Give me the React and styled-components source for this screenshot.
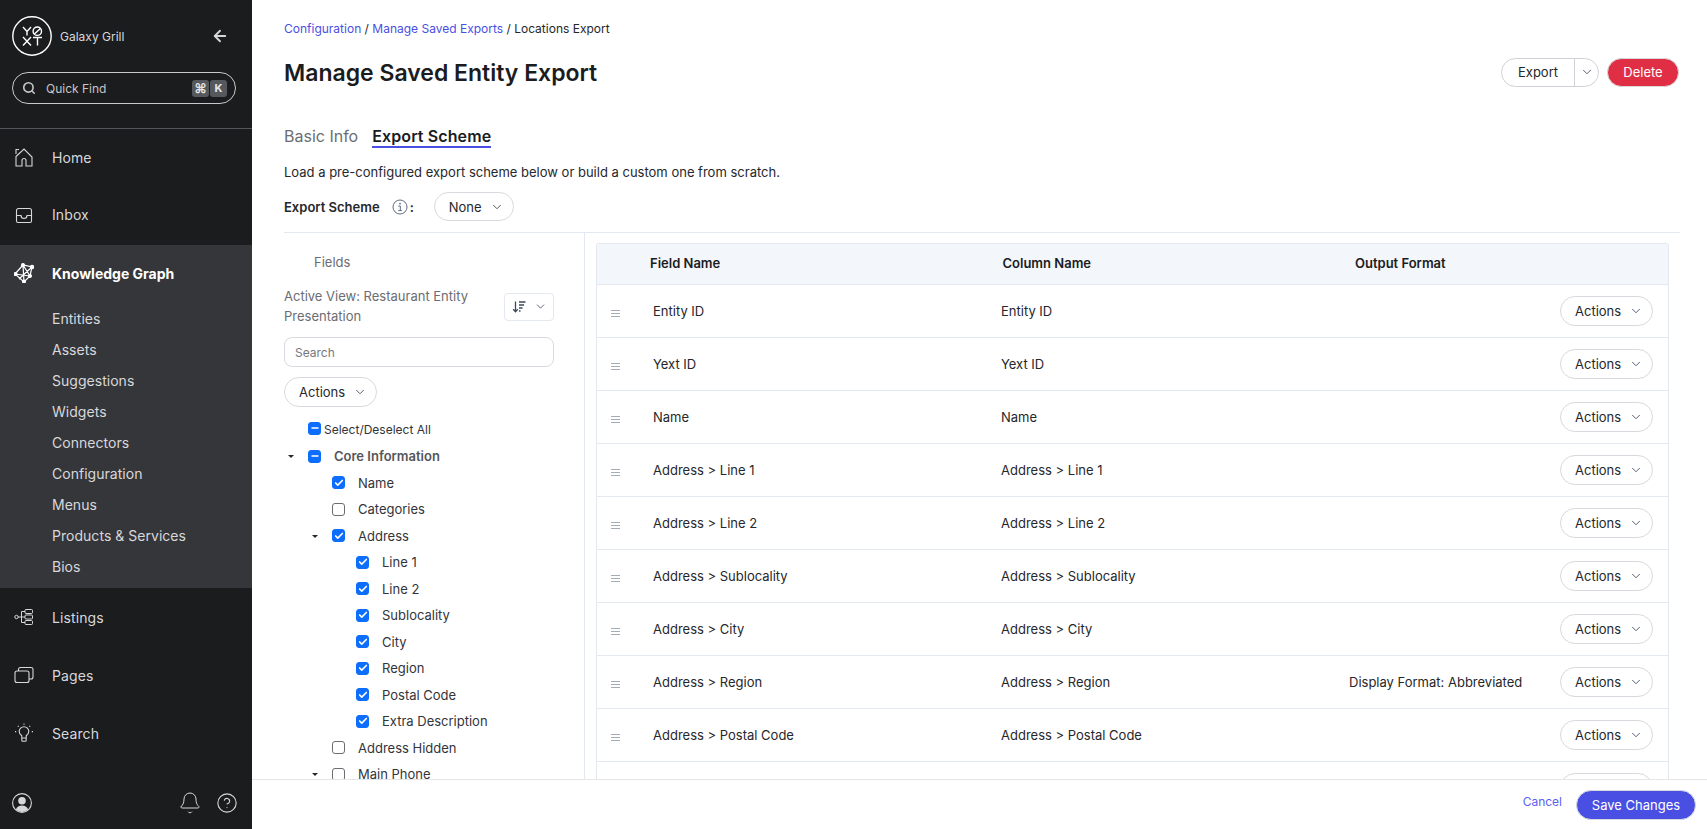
import React from "react";
import styled, { createGlobalStyle } from "styled-components";
import { ArrowLeft, Search, ChevronDown, Bell, CircleHelp, Check, Minus } from "lucide-react";

const GlobalStyle = createGlobalStyle`
  html, body {
    margin: 0;
    height: 100%;
    background: #fff;
  }
  body {
    font-family: Inter, "Liberation Sans", sans-serif;
    color: #26272b;
    overflow: hidden;
  }
  * {
    box-sizing: border-box;
  }
`;

const Page = styled.div`
  display: flex;
  height: 100vh;
`;

const Sidebar = styled.aside`
  width: 252px;
  flex: none;
  display: flex;
  flex-direction: column;
  background: #1b1c1e;
  color: #d8d8da;
`;

const SideTop = styled.div`
  padding: 16px 15px 24px 12px;
  border-bottom: 1px solid #56575a;
  height: 129px;
`;

const Brand = styled.div`
  display: flex;
  align-items: center;
  height: 40px;
  padding-right: 8px;
  font-size: 12px;
  color: #d8d8da;

  span {
    margin-left: 8px;
    flex: 1;
  }
`;

const QuickFind = styled.div`
  display: flex;
  align-items: center;
  height: 32px;
  width: 224px;
  margin-top: 16px;
  padding: 0 8px 0 9px;
  border: 1px solid #c9c9cb;
  border-radius: 16px;
  font-size: 12px;
  color: #c6c6c8;

  span {
    margin-left: 10px;
    flex: 1;
  }
`;

const Key = styled.kbd`
  display: flex;
  align-items: center;
  justify-content: center;
  width: 17px;
  height: 17px;
  margin-left: 1px;
  border-radius: 3px;
  background: #55585c;
  color: #e6e6e6;
  font-family: Inter, "DejaVu Sans", sans-serif;
  font-size: ${(p) => p.$size || 11}px;
  font-weight: 700;
`;

const NavItem = styled.div`
  display: flex;
  align-items: center;
  height: 58px;
  padding: 0 0 ${(p) => p.$lift || 0}px 14px;
  font-size: 14px;
  font-weight: ${(p) => (p.$active ? 700 : 400)};
  letter-spacing: ${(p) => (p.$active ? "0" : "0.1px")};
  color: ${(p) => (p.$active ? "#fff" : "#d8d8da")};

  svg {
    width: 20px;
    height: 20px;
    flex: none;
    margin-right: 18px;
  }
`;

const ActiveGroup = styled.div`
  background: #35363a;
  padding-bottom: 6px;
`;

const SubItem = styled.div`
  display: flex;
  align-items: center;
  height: 31px;
  padding-left: 52px;
  font-size: 14px;
  letter-spacing: 0.03px;
  color: #d8d8da;
`;

const SideFoot = styled.div`
  display: flex;
  align-items: center;
  margin-top: auto;
  height: 52px;
  padding: 0 14px 0 12px;
  color: #d8d8da;

  svg + svg {
    margin-left: 14px;
  }
`;

const Avatar = styled.svg`
  width: 20px;
  height: 20px;
  margin-right: auto;
`;

const Main = styled.main`
  flex: 1;
  min-width: 0;
  display: flex;
  flex-direction: column;
`;

const Content = styled.div`
  flex: 1;
  min-height: 0;
  display: flex;
  flex-direction: column;
  overflow: hidden;
  padding: 20px 27px 0 32px;
`;

const Breadcrumb = styled.div`
  height: 18px;
  font-size: 12px;
  line-height: 18px;
  color: #26272b;

  a {
    color: #4a4fe4;
    text-decoration: none;
  }
`;

const TitleRow = styled.div`
  display: flex;
  align-items: center;
  justify-content: space-between;
  height: 40px;
  margin-top: 15px;

  h1 {
    margin: 0;
    font-size: 23px;
    font-weight: 600;
    color: #1b1c1e;
  }
`;

const TitleActions = styled.div`
  display: flex;
  align-items: center;
  gap: 8px;
  margin: 0 1px 2px 0;
`;

const Split = styled.div`
  display: flex;
  align-items: center;
  height: 29px;
  border: 1px solid #cfd1d6;
  border-radius: 15px;
  font-size: 13px;
  background: #fff;

  span {
    padding: 0 16px;
    line-height: 27px;
    border-right: 1px solid #cfd1d6;
  }
  svg {
    margin: 0 4px 0 5px;
    color: #3b4a5f;
  }
`;

const DangerButton = styled.button`
  height: 29px;
  width: 72px;
  padding: 0;
  border: 1px solid #d8d9de;
  border-radius: 15px;
  background: #e02f44;
  color: #fff;
  font: inherit;
  font-size: 13px;
`;

const Tabs = styled.div`
  display: flex;
  gap: 14px;
  margin-top: 33px;
  height: 22px;
  font-size: 16px;
  line-height: 20px;
`;

const Tab = styled.div`
  color: ${(p) => (p.$active ? "#1b1c1e" : "#6c6d72")};
  font-weight: ${(p) => (p.$active ? 600 : 400)};
  letter-spacing: ${(p) => (p.$active ? "0.1px" : "0")};
  border-bottom: ${(p) => (p.$active ? "2px solid #4a4fe4" : "none")};
`;

const Description = styled.p`
  margin: 15px 0 0;
  font-size: 13px;
  line-height: 18px;
`;

const SchemeRow = styled.div`
  display: flex;
  align-items: center;
  margin-top: 11px;
  padding-bottom: 11px;
  border-bottom: 1px solid #e4e8f0;
  font-size: 13px;

  b {
    font-weight: 600;
  }
  > svg {
    margin: 0 2px 0 12px;
  }
  i {
    font-style: normal;
    font-weight: 600;
    margin-right: 20px;
  }
`;

const PillButton = styled.div`
  display: inline-flex;
  align-items: center;
  gap: 8px;
  width: ${(p) => p.$width || 93}px;
  height: ${(p) => p.$height || 30}px;
  flex: none;
  padding-left: 14px;
  border: 1px solid #d8d9de;
  border-radius: 15px;
  background: #fff;
  font-size: 13px;
  color: #26272b;

  svg {
    color: #3b4a5f;
  }
`;

const SplitPane = styled.div`
  flex: 1;
  min-height: 0;
  display: flex;
`;

const TreePanel = styled.section`
  width: 301px;
  flex: none;
  padding: 19px 30px 0 0;
  border-right: 1px solid #e4e8f0;
  overflow: hidden;
`;

const FieldsLabel = styled.div`
  padding-left: 30px;
  font-size: 13px;
  line-height: 20px;
  color: #6c6d72;
`;

const ViewRow = styled.div`
  display: flex;
  align-items: center;
  justify-content: space-between;
  margin-top: 15px;
  font-size: 13px;
  line-height: 19.5px;
  color: #6c6d72;

  span {
    width: 200px;
  }
`;

const SortButton = styled.div`
  display: flex;
  align-items: center;
  justify-content: center;
  gap: 8px;
  width: 50px;
  height: 28px;
  border: 1px solid #e4e8f0;
  border-radius: 4px;
  color: #3b4a5f;
`;

const SearchInput = styled.input`
  display: block;
  width: 270px;
  height: 30px;
  margin: 11px 0 10px;
  padding: 0 10px;
  border: 1px solid #d8d9de;
  border-radius: 8px;
  font: inherit;
  font-size: 12px;
  outline: none;

  &::placeholder {
    color: #77787d;
  }
`;

const Tree = styled.div`
  margin-top: 9.5px;
`;

const TreeRow = styled.div`
  position: relative;
  display: flex;
  align-items: center;
  height: 26.5px;
  padding-left: ${(p) => p.$level * 24}px;
  font-size: ${(p) => (p.$tight ? 12 : 13)}px;
  white-space: nowrap;
  font-weight: ${(p) => (p.$bold ? 600 : 400)};
  color: ${(p) => (p.$bold ? "#55565a" : "#33343a")};
`;

const Caret = styled.div`
  position: absolute;
  left: ${(p) => p.$level * 24 - 20}px;
  top: 12px;
  width: 0;
  height: 0;
  border-left: 3.5px solid transparent;
  border-right: 3.5px solid transparent;
  border-top: 3.5px solid #26272b;
`;

const Box = styled.div`
  display: flex;
  align-items: center;
  justify-content: center;
  width: 13px;
  height: 13px;
  flex: none;
  margin-right: ${(p) => (p.$tight ? 3 : 13)}px;
  margin-bottom: ${(p) => (p.$tight ? 3 : 0)}px;
  border-radius: 3px;
  border: 1px solid ${(p) => (p.$on ? "#0d6efd" : "#6c6d72")};
  background: ${(p) => (p.$on ? "#0d6efd" : "#fff")};
  color: #fff;
`;

const TablePanel = styled.section`
  flex: 1;
  min-width: 0;
  padding: 10px 11px 0 11px;
  overflow: hidden;
`;

const Table = styled.div`
  border: 1px solid #e4e8f0;
  border-bottom: none;
  border-radius: 3px 3px 0 0;
`;

const HeadRow = styled.div`
  display: flex;
  align-items: center;
  height: 41px;
  background: #f3f6fb;
  border-bottom: 1px solid #e4e8f0;
  font-size: 13px;
  font-weight: 600;
  color: #1b1c1e;
  padding-left: 53px;

  span {
    width: 352.5px;
    flex: none;
    padding-bottom: 2px;
  }
`;

const Row = styled.div`
  display: flex;
  align-items: center;
  height: 53px;
  padding: 0 15px 0 0;
  border-bottom: 1px solid #e4e8f0;
  font-size: 13px;
`;

const Handle = styled.div`
  width: 56px;
  flex: none;
  padding: 5px 0 0 14px;

  svg {
    display: block;
  }
`;

const Cell = styled.div`
  width: ${(p) => p.$width}px;
  flex: none;
  padding-bottom: 1px;
`;

const OutputCell = styled.div`
  flex: 1;
  min-width: 0;
  padding-bottom: 1px;
`;

const RowAction = styled.div`
  flex: none;
  margin-bottom: 1px;
`;

const Footer = styled.footer`
  display: flex;
  align-items: center;
  justify-content: flex-end;
  height: 50px;
  flex: none;
  padding: 0 11px 0 0;
  border-top: 1px solid #e6e6e8;
  background: #fff;
`;

const CancelLink = styled.a`
  margin: 0 14px 6px 0;
  font-size: 12px;
  color: #5a5ff0;
`;

const SaveButton = styled.button`
  width: 120px;
  height: 30px;
  margin-top: 1px;
  padding: 0;
  border: 1px solid #d8d9de;
  border-radius: 15px;
  background: #4a4fe4;
  color: #fff;
  font: inherit;
  font-size: 13px;
`;

const Logo = () => (
  <svg width="40" height="40" viewBox="0 0 40 40" fill="none" stroke="#fff" strokeWidth="1.4" style={{ flex: "none" }}>
    <circle cx="20" cy="20" r="19.2" />
    <path d="M11 11l4 4.5 4-4.5M15 15.5V19.5" />
    <circle cx="25.3" cy="15.2" r="4.2" />
    <path d="M22.4 18l6-5.6" />
    <path d="M11 21l8 8.5M19 21l-8 8.5M21 21.5h9M25.5 21.5v8" />
  </svg>
);

const HomeIcon = () => (
  <svg viewBox="0 0 20 20" fill="none" stroke="currentColor" strokeWidth="1.1">
    <path d="M2 9.5L10 2l8 8v9h-6v-5.5a2 2 0 0 0-4 0V19H2z" />
    <path d="M2 7V2.5h3" />
  </svg>
);

const InboxIcon = () => (
  <svg viewBox="0 0 20 20" fill="none" stroke="currentColor" strokeWidth="1.1">
    <path d="M4.5 3.5h11a2 2 0 0 1 2 2V16a1.5 1.5 0 0 1-1.5 1.5H4A1.5 1.5 0 0 1 2.5 16V5.5a2 2 0 0 1 2-2z" />
    <path d="M2.5 10.5h4.5a3 3 0 0 0 6 0h4.5" />
  </svg>
);

const GraphIcon = () => (
  <svg viewBox="0 0 20 20" fill="none" stroke="currentColor" strokeWidth="1.2">
    <path d="M1 11l8-9 9 2-2 9-6 6zM9 2l1 17M1 11l15 2M18 4L5 16M9 2l7 11" />
    <circle cx="9" cy="2" r="1.4" fill="currentColor" />
    <circle cx="18" cy="4" r="1.6" fill="currentColor" />
    <circle cx="1.5" cy="11" r="1.4" fill="currentColor" />
    <circle cx="16" cy="13" r="1.4" fill="currentColor" />
    <circle cx="10" cy="18.5" r="1.4" fill="currentColor" />
  </svg>
);

const ListingsIcon = () => (
  <svg viewBox="0 0 20 20" fill="none" stroke="currentColor" strokeWidth="1">
    <circle cx="2.5" cy="10" r="1.7" />
    <path d="M4.2 10H11M7.5 4.5V15.5M7.5 4.5H11M7.5 15.5H11" />
    <rect x="11" y="2.5" width="7.5" height="4" rx="1" />
    <rect x="11" y="8" width="7.5" height="4" rx="1" />
    <rect x="11" y="13.5" width="7.5" height="4" rx="1" />
  </svg>
);

const PagesIcon = () => (
  <svg viewBox="0 0 20 20" fill="none" stroke="currentColor" strokeWidth="1.1">
    <rect x="1" y="6" width="14" height="11.5" rx="2" />
    <path d="M4.5 6V4.5a2 2 0 0 1 2-2H17a2 2 0 0 1 2 2V12a2 2 0 0 1-2 2h-2" />
  </svg>
);

const BulbIcon = () => (
  <svg viewBox="0 0 20 20" fill="none" stroke="currentColor" strokeWidth="1.1">
    <path d="M7.8 15v-2.2C6.4 11.8 5.2 10.4 5.2 8.6a4.8 4.8 0 0 1 9.6 0c0 1.8-1.2 3.2-2.6 4.2V15zM7.8 15v2.2c0 .6.4 1 1 1h2.4c.6 0 1-.4 1-1V15" />
    <path d="M10 .5v1.2M3.8 2.8l.9.9M16.2 2.8l-.9.9M1 8.6h1.2M17.8 8.6H19" />
  </svg>
);

const InfoIcon = () => (
  <svg width="16" height="16" viewBox="0 0 16 16" fill="none" stroke="#5d6b80" strokeWidth="1">
    <circle cx="8" cy="8" r="7" />
    <circle cx="8" cy="4.6" r=".9" fill="#5d6b80" stroke="none" />
    <path d="M6.3 7h2v4.6M6.3 11.6h3.6" />
  </svg>
);

const SortIcon = () => (
  <svg width="14" height="14" viewBox="0 0 14 14" fill="none" stroke="currentColor" strokeWidth="1.3">
    <path d="M3.5 1.5v10M1.2 9.2l2.3 2.6 2.3-2.6M7 2h6.5M7 5h5M7 8h3.5M7 11h1.5" />
  </svg>
);

const DragIcon = () => (
  <svg width="9" height="7" viewBox="0 0 9 7" stroke="#a4acb6" strokeWidth="1">
    <path d="M0 .5h9M0 3.5h9M0 6.5h9" />
  </svg>
);

const subNav = ["Entities", "Assets", "Suggestions", "Widgets", "Connectors", "Configuration", "Menus", "Products & Services", "Bios"];

const treeItems = [
  { label: "Select/Deselect All", level: 1, state: "some", tight: true },
  { label: "Core Information", level: 1, state: "some", caret: true, bold: true },
  { label: "Name", level: 2, state: "on" },
  { label: "Categories", level: 2, state: "off" },
  { label: "Address", level: 2, state: "on", caret: true },
  { label: "Line 1", level: 3, state: "on" },
  { label: "Line 2", level: 3, state: "on" },
  { label: "Sublocality", level: 3, state: "on" },
  { label: "City", level: 3, state: "on" },
  { label: "Region", level: 3, state: "on" },
  { label: "Postal Code", level: 3, state: "on" },
  { label: "Extra Description", level: 3, state: "on" },
  { label: "Address Hidden", level: 2, state: "off" },
  { label: "Main Phone", level: 2, state: "off", caret: true },
];

const rows = [
  { name: "Entity ID" },
  { name: "Yext ID" },
  { name: "Name" },
  { name: "Address > Line 1" },
  { name: "Address > Line 2" },
  { name: "Address > Sublocality" },
  { name: "Address > City" },
  { name: "Address > Region", output: "Display Format: Abbreviated" },
  { name: "Address > Postal Code" },
  { name: "" },
];

const Actions = () => (
  <PillButton>
    Actions
    <ChevronDown size={14} strokeWidth={1.5} />
  </PillButton>
);

export default function App() {
  return (
    <Page>
      <GlobalStyle />
      <Sidebar>
        <SideTop>
          <Brand>
            <Logo />
            <span>Galaxy Grill</span>
            <ArrowLeft size={18} strokeWidth={2.4} />
          </Brand>
          <QuickFind>
            <Search size={14} strokeWidth={2.8} />
            <span>Quick Find</span>
            <Key $size={13}>⌘</Key>
            <Key>K</Key>
          </QuickFind>
        </SideTop>
        <NavItem $lift={2}><HomeIcon />Home</NavItem>
        <NavItem $lift={3}><InboxIcon />Inbox</NavItem>
        <ActiveGroup>
          <NavItem $active $lift={2}><GraphIcon />Knowledge Graph</NavItem>
          {subNav.map((item) => (
            <SubItem key={item}>{item}</SubItem>
          ))}
        </ActiveGroup>
        <NavItem><ListingsIcon />Listings</NavItem>
        <NavItem><PagesIcon />Pages</NavItem>
        <NavItem><BulbIcon />Search</NavItem>
        <SideFoot>
          <Avatar viewBox="0 0 20 20">
            <circle cx="10" cy="10" r="9.4" fill="none" stroke="#d8d8da" strokeWidth="1.1" />
            <circle cx="10" cy="7.8" r="3.8" fill="#d8d8da" />
            <path d="M3.8 16.6c1-3 3.4-4.2 6.2-4.2s5.2 1.2 6.2 4.2A9 9 0 0 1 10 19a9 9 0 0 1-6.2-2.4z" fill="#d8d8da" />
          </Avatar>
          <Bell size={24} strokeWidth={1} />
          <CircleHelp size={22} strokeWidth={1.2} />
        </SideFoot>
      </Sidebar>

      <Main>
        <Content>
          <Breadcrumb>
            <a href="#">Configuration</a> / <a href="#">Manage Saved Exports</a> / Locations Export
          </Breadcrumb>
          <TitleRow>
            <h1>Manage Saved Entity Export</h1>
            <TitleActions>
              <Split>
                <span>Export</span>
                <ChevronDown size={14} strokeWidth={1.5} />
              </Split>
              <DangerButton>Delete</DangerButton>
            </TitleActions>
          </TitleRow>
          <Tabs>
            <Tab>Basic Info</Tab>
            <Tab $active>Export Scheme</Tab>
          </Tabs>
          <Description>Load a pre-configured export scheme below or build a custom one from scratch.</Description>
          <SchemeRow>
            <b>Export Scheme</b>
            <InfoIcon />
            <i>:</i>
            <PillButton $width={80} $height={29}>
              None
              <ChevronDown size={14} strokeWidth={1.5} />
            </PillButton>
          </SchemeRow>

          <SplitPane>
            <TreePanel>
              <FieldsLabel>Fields</FieldsLabel>
              <ViewRow>
                <span>Active View: Restaurant Entity Presentation</span>
                <SortButton>
                  <SortIcon />
                  <ChevronDown size={13} strokeWidth={1.5} />
                </SortButton>
              </ViewRow>
              <SearchInput placeholder="Search" />
              <Actions />
              <Tree>
                {treeItems.map((item) => (
                  <TreeRow key={item.label} $level={item.level} $bold={item.bold} $tight={item.tight}>
                    {item.caret && <Caret $level={item.level} />}
                    <Box $on={item.state !== "off"} $tight={item.tight}>
                      {item.state === "on" && <Check size={10} strokeWidth={4} />}
                      {item.state === "some" && <Minus size={10} strokeWidth={4} />}
                    </Box>
                    {item.label}
                  </TreeRow>
                ))}
              </Tree>
            </TreePanel>

            <TablePanel>
              <Table>
                <HeadRow>
                  <span>Field Name</span>
                  <span>Column Name</span>
                  <span>Output Format</span>
                </HeadRow>
                {rows.map((row, i) => (
                  <Row key={i}>
                    <Handle>{row.name && <DragIcon />}</Handle>
                    <Cell $width={348}>{row.name}</Cell>
                    <Cell $width={348}>{row.name}</Cell>
                    <OutputCell>{row.output}</OutputCell>
                    <RowAction><Actions /></RowAction>
                  </Row>
                ))}
              </Table>
            </TablePanel>
          </SplitPane>
        </Content>
        <Footer>
          <CancelLink>Cancel</CancelLink>
          <SaveButton>Save Changes</SaveButton>
        </Footer>
      </Main>
    </Page>
  );
}
